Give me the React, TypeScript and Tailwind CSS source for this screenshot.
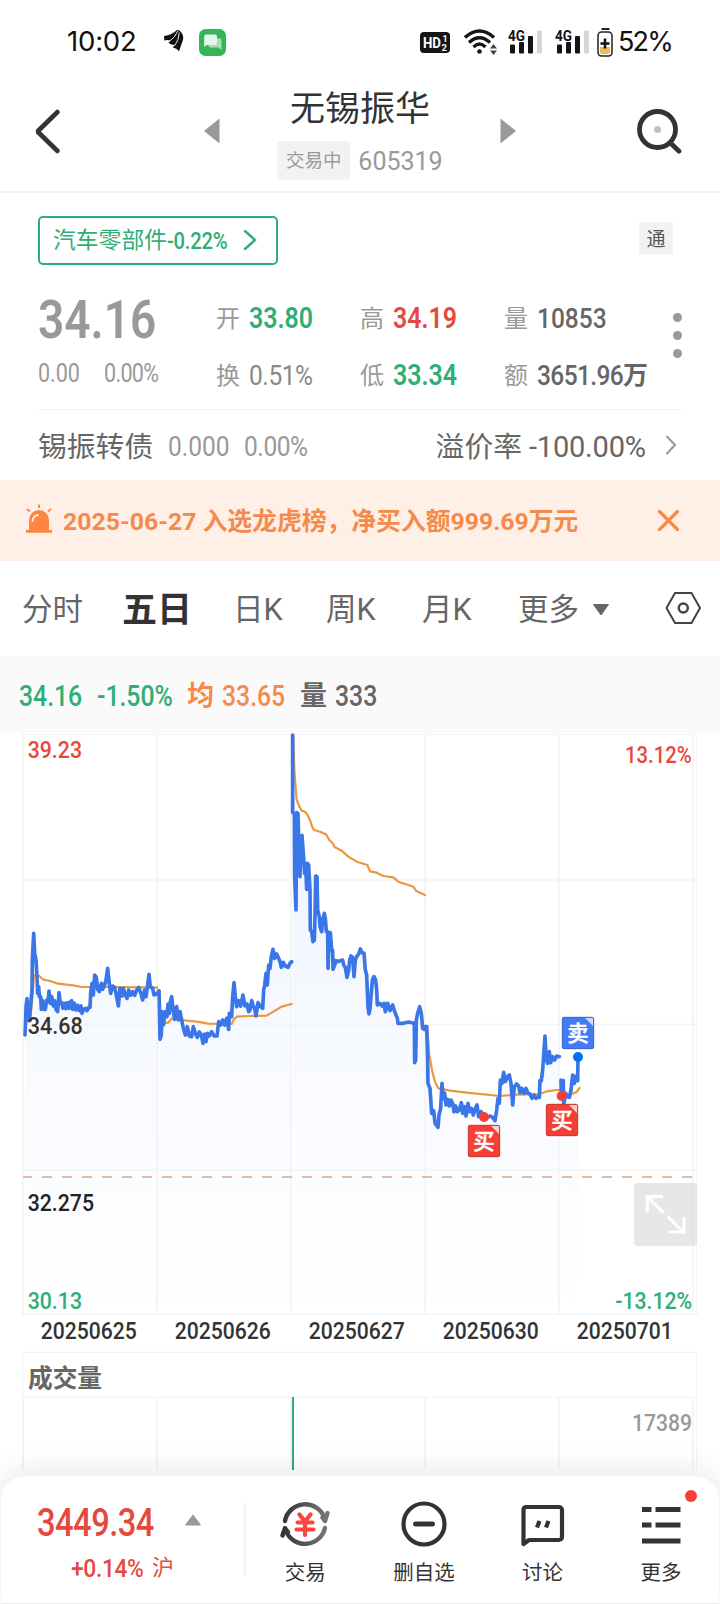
import React from "react";

const sessions = [
  {
    x: 0,
    price:
      "75,915 77,870 78,830 81,806 84,850 88,872 92,825 96,780 97,690 101,610 104,670 108,690 111,740 113,790 116,770 118,800 122,800 124,838 128,812 132,838 136,838 140,810 144,815 147,783 151,820 155,800 160,828 164,812 168,838 173,845 177,788 181,820 185,818 189,835 193,820 198,836 202,818 208,835 211,815 215,812 218,838 223,820 228,840 233,826 238,842 243,828 246,850 250,840 256,835 261,842 266,832 270,832 272,790 276,760 280,795 284,735 289,742 293,778 298,785 304,760 308,778 314,765 318,750 323,715 328,760 332,790 338,768 344,772 350,800 355,828 360,775 366,798 370,775 376,795 381,805 386,780 392,796 398,785 404,796 410,780 416,772 422,788 428,810 434,780 438,800 443,765 447,733 451,770 458,775 462,795 470,792 477,783",
    avg: "78,870 85,875 92,855 97,800 102,735 108,735 118,738 128,748 150,753 170,760 200,764 220,766 245,771 330,771 430,772 472,773",
  },
  {
    x: 0,
    price:
      "477,783 478,820 480,928 484,915 486,845 490,885 496,845 501,860 504,822 508,850 511,815 515,800 519,835 524,868 530,830 535,870 540,845 546,875 550,895 556,915 562,890 568,918 575,920 580,890 586,910 592,922 598,906 604,915 609,940 613,912 618,935 622,910 628,918 635,905 642,918 651,918 656,875 662,885 668,870 674,885 680,865 686,898 688,850 695,860 698,800 702,758 706,800 710,830 716,812 722,828 729,795 735,828 741,822 746,845 750,840 755,812 760,828 764,835 768,858 774,818 780,828 788,835 791,780 794,765 798,730 802,765 806,705 810,715 814,680 819,658 824,685 830,672 836,685 840,695 844,712 850,697 856,708 864,712 870,700 875,695",
    avg: "490,880 505,878 515,865 535,868 560,872 590,875 625,881 695,882 702,868 710,860 750,858 800,857 825,842 845,830 875,822",
  },
  {
    x: 840,
    price:
      "38,15 38,248 43,250 44,440 48,540 50,248 54,250 56,330 60,440 62,360 66,316 70,370 74,430 78,425 80,478 82,400 86,405 90,480 91,600 95,605 99,635 103,630 105,560 107,438 111,440 113,540 118,560 120,590 125,605 128,570 133,550 136,565 139,605 143,605 144,715 148,610 151,608 155,660 158,660 159,718 164,705 168,692 174,695 180,692 188,690 191,705 196,712 201,742 206,720 209,690 213,678 218,682 222,740 226,690 230,680 236,672 241,657 246,668 252,670 256,720 260,735 264,830 267,852 270,835 273,800 277,750 282,740 287,750 290,780 292,825 300,820 306,828 312,820 316,845 323,820 330,842 338,825 344,845 352,865 354,880 370,880 385,876 403,880 404,998 407,990 409,870 413,850 419,830 424,850 428,895 432,898 436,890 440,890",
    avg: "40,20 43,120 50,210 58,230 65,242 72,244 80,250 92,275 97,292 103,300 120,305 138,313 148,330 158,340 165,352 185,362 205,380 230,395 262,405 270,424 290,428 310,438 340,442 355,455 385,465 400,470 408,482 435,495",
  },
  {
    x: 1200,
    price:
      "80,890 83,990 84,1060 90,1075 95,1150 101,1142 105,1180 109,1185 114,1192 117,1155 122,1135 126,1060 129,1105 134,1090 138,1125 143,1108 148,1128 153,1110 158,1120 162,1145 167,1128 172,1145 178,1140 184,1118 188,1150 194,1130 198,1158 204,1120 209,1145 214,1135 220,1155 225,1138 231,1125 236,1160 243,1145 250,1155 258,1165 270,1158 278,1162 285,1172 290,1140 294,1105 298,1120 301,1050 306,1060 311,1027 316,1055 322,1040 328,1035 333,1060 338,1125 343,1070 350,1062 356,1068 360,1088 366,1075 372,1090 378,1075 384,1090 390,1092 396,1105 402,1095 408,1105 414,1100 418,1102 420,1052 424,1052 428,1020 432,960 435,918 439,990 443,1000 448,965 452,998 458,980 464,990 470,978 478,980",
    avg: "82,900 88,975 98,1030 106,1058 115,1075 150,1082 200,1088 300,1098 350,1094 420,1092 440,1084 470,1080 484,1080",
  },
  {
    x: 1200,
    price:
      "483,1050 484,1095 490,1052 491,1125 497,1090 502,1100 508,1102 513,1080 518,1035 523,1060 528,1038 533,1052 534,981",
    avg: "484,1080 500,1100 515,1092 530,1086 539,1074",
  },
];

const gridX = [69, 471, 873, 1275, 1677, 2079];

const dates = [
  { label: "20250625", x: 124 },
  { label: "20250626", x: 526 },
  { label: "20250627", x: 928 },
  { label: "20250630", x: 1330 },
  { label: "20250701", x: 1732 },
];

const trades = [
  { label: "买", x: 1404, y: 1185, dotX: 1452, dotY: 1161, fill: "#f53f35", edge: "#c9332b", dot: "#f53f35" },
  { label: "买", x: 1638, y: 1122, dotX: 1685, dotY: 1098, fill: "#f53f35", edge: "#c9332b", dot: "#f53f35" },
  { label: "卖", x: 1686, y: 861, dotX: 1734, dotY: 981, fill: "#427af7", edge: "#3563cc", dot: "#0073f5" },
];

// Narrow figures: the className carries the width that the squeezed text takes up
const Num = ({ children, className = "" }: { children: React.ReactNode; className?: string }) => (
  <span className={`inline-block shrink-0 whitespace-nowrap ${className}`}>
    <span className="inline-block origin-left scale-x-[0.86]">{children}</span>
  </span>
);

// areas are closed along the first and last x of the line
const closeArea = (points: string) => {
  const list = points.split(" ");
  const first = list[0].split(",")[0];
  const last = list[list.length - 1].split(",")[0];
  return `${first},1753 ${points} ${last},1753`;
};

const SignalIcon = () => (
  <svg width="35" height="26" viewBox="0 0 35 26">
    <text x="0" y="11.5" fontSize="15" fontWeight="700" fill="#111" textLength="17" lengthAdjust="spacingAndGlyphs">4G</text>
    <g fill="#151515">
      <rect x="2" y="15.5" width="5" height="9" rx="1" />
      <rect x="11" y="13" width="5" height="11.5" rx="1" />
      <rect x="20" y="7" width="5" height="17.5" rx="1" />
    </g>
    <rect x="29" y="1.5" width="5" height="23" rx="1" fill="#d6d6d6" />
  </svg>
);

const StatusBar = () => (
  <div className="flex h-[84px] items-center pl-[67px] pr-[50px] text-[#111]">
    <span className="w-[97px] font-[Inter] text-[27.5px] tracking-[-0.2px]">10:02</span>
    <svg width="20" height="22" viewBox="0 0 20 22" className="mt-[-2px]">
      <path d="M0 6Q8 5 13 0L15.500 0.500Q20.500 5 18.800 10.500Q17.500 14 15 21.500Q13.500 18.500 9 17.500L10.500 14.500Q8 15.500 4.500 13L6.500 10.500Q3 9.500 0.300 10.500Z" fill="#111" />
      <path d="M5 11.500Q11 8 13.800 1M10.500 16Q15 10 15.300 2.500" fill="none" stroke="#fff" strokeWidth="0.900" />
    </svg>
    <svg width="27" height="27" viewBox="0 0 27 27" className="ml-[15px]">
      <rect width="27" height="27" rx="6.5" fill="#35b558" />
      <path d="M10 9.5h10.5a2 2 0 0 1 2 2v9.5l-3-2.5H11.500a2 2 0 0 1-2-2z" fill="#a8e0b5" />
      <path d="M7 5.500h9a2 2 0 0 1 2 2v6.500a2 2 0 0 1-2 2H8l-2.800 2V7.500a2 2 0 0 1 1.800-2z" fill="#e5f7e9" />
    </svg>
    <svg width="30" height="21" viewBox="0 0 30 21" className="ml-auto">
      <rect width="30" height="21" rx="4" fill="#151515" />
      <g fill="#fff" fontWeight="700">
        <text x="3" y="16" fontSize="15.5" textLength="18" lengthAdjust="spacingAndGlyphs">HD</text>
        <text x="22.500" y="9.500" fontSize="9">1</text>
        <text x="21.500" y="18.500" fontSize="9.500">2</text>
      </g>
    </svg>
    <svg width="34" height="26" viewBox="0 0 34 26" className="ml-3.5">
      <g fill="none" stroke="#151515" strokeWidth="3.4">
        <path d="M1 8.500Q15.500-4.500 30 8.500" />
        <path d="M5 13.500Q15.500 4 26 13.500" />
        <path d="M9.500 18Q15.500 12 21.500 18" />
      </g>
      <circle cx="15.500" cy="22.500" r="2.300" fill="#151515" />
      <path d="M29.500 15l3.500 4.500h-7zM29.500 26l3.500-4.500h-7z" fill="#444" />
    </svg>
    <div className="ml-2.5 flex gap-3">
      <SignalIcon />
      <SignalIcon />
    </div>
    <svg width="16" height="29" viewBox="0 0 16 29" className="ml-[7px]">
      <rect x="4.500" y="0" width="8" height="2" fill="#222" />
      <rect x="1" y="4" width="14" height="24" rx="3.500" fill="none" stroke="#222" strokeWidth="1.500" />
      <path d="M3 19h10v5a2 2 0 0 1-2 2H5a2 2 0 0 1-2-2z" fill="#eebc50" />
      <path d="M8 10.500v10M3.500 15.500h9" stroke="#111" strokeWidth="2.500" />
    </svg>
    <span className="ml-[5px] w-[52px] whitespace-nowrap font-[Inter] text-[27px] tracking-[-1.8px]">52%</span>
  </div>
);

const Header = () => (
  <header className="flex h-[109px] items-start border-b-2 border-[#f2f2f2] pl-[34px] pr-[38px]">
    <svg width="27" height="48" viewBox="0 0 27 48" className="mt-[23px]">
      <path d="M23.500 5L3.500 24.500L23.500 44" fill="none" stroke="#333" strokeWidth="4.600" strokeLinecap="round" strokeLinejoin="bevel" />
    </svg>
    <div className="ml-[143px] flex">
      <svg width="16" height="26" viewBox="0 0 16 26" className="mt-[34px]">
        <path d="M0 13L15.500 0.500V25.500z" fill="#999" />
      </svg>
      <div className="mx-[58px] flex w-[164px] flex-col items-center pt-[3px]">
        <h1 className="text-[35px] leading-[46px] text-[#333]">无锡振华</h1>
        <div className="mt-[7px] flex items-center gap-[8px]">
          <span className="flex h-[39px] w-[73px] items-center justify-center rounded bg-[#f2f2f2] pt-[3px] text-[18.5px] text-[#999]">交易中</span>
          <span className="pt-[3px] text-[25px] text-[#999]">605319</span>
        </div>
      </div>
      <svg width="16" height="26" viewBox="0 0 16 26" className="mt-[34px]">
        <path d="M16 13L0.500 0.500V25.500z" fill="#999" />
      </svg>
    </div>
    <svg width="46" height="46" viewBox="0 0 46 46" className="ml-auto mt-[24px]">
      <circle cx="21.500" cy="21.500" r="18" fill="none" stroke="#333" strokeWidth="4.800" />
      <path d="M34.500 35L43 43.200" stroke="#333" strokeWidth="4.800" strokeLinecap="round" />
      <circle cx="21.500" cy="21.500" r="3.500" fill="#c0c0c0" />
    </svg>
  </header>
);

const Stat = ({ label, children }: { label: string; children: React.ReactNode }) => (
  <div className="flex h-[57px] items-center gap-[9px] whitespace-nowrap pt-[3px]">
    <span className="text-[24px] text-[#999]">{label}</span>
    {children}
  </div>
);

const Quote = () => (
  <section className="h-[287px] px-[38px] pt-[23px]">
    <div className="flex items-center justify-between pr-[9px]">
      <div className="flex h-[49px] w-[240px] items-center rounded-[5px] border-2 border-[#2fae75] pl-[13px] pt-0.5 text-[#2fae75]">
        <span className="text-[22.8px]">汽车零部件</span>
        <Num className="w-[62px] text-[23.500px] font-medium tracking-[-0.3px]">-0.22%</Num>
        <svg width="14" height="22" viewBox="0 0 14 22" className="ml-3.5 mt-[-3px]">
          <path d="M2 2L12 11L2 20" fill="none" stroke="#2fae75" strokeWidth="2.400" strokeLinecap="round" />
        </svg>
      </div>
      <span className="mt-[-5px] flex h-8 w-[34px] items-center justify-center bg-[#f2f2f2] pt-[4px] text-[19px] text-[#555]">通</span>
    </div>

    <div className="mt-6 flex h-[120px]">
      <div className="w-[178px] text-[#999]">
        <Num className="mt-px w-[120px] text-[53.500px] font-semibold leading-[60px]">34.16</Num>
        <div className="mt-2.5 flex text-[25px] leading-[28px]">
          <Num className="w-[66px]">0.00</Num>
          <Num className="w-[60px] tracking-[-0.8px]">0.00%</Num>
        </div>
      </div>
      <div className="w-[144px]">
        <Stat label="开"><Num className="w-16 text-[29px] font-semibold text-[#2fae75]">33.80</Num></Stat>
        <Stat label="换"><Num className="w-16 text-[28.5px] tracking-[-0.5px] text-[#888]">0.51%</Num></Stat>
      </div>
      <div className="w-[144px]">
        <Stat label="高"><Num className="w-16 text-[29px] font-semibold text-[#e5493e]">34.19</Num></Stat>
        <Stat label="低"><Num className="w-16 text-[29px] font-semibold text-[#2fae75]">33.34</Num></Stat>
      </div>
      <div className="w-[169px]">
        <Stat label="量"><Num className="w-[70px] text-[28.5px] font-medium text-[#666]">10853</Num></Stat>
        <Stat label="额">
          <span className="flex items-center text-[#666]">
            <span className="inline-block w-[86px] whitespace-nowrap text-[28.5px] font-medium">
              <span className="inline-block w-[86px] origin-left scale-x-[0.86] tracking-[-0.700px]">3651.96</span>
            </span>
            <span className="text-[25px] font-bold">万</span>
          </span>
        </Stat>
      </div>
      <div className="flex flex-col gap-[9px] pt-[24px]">
        <i className="size-[9px] rounded-full bg-[#999]" />
        <i className="size-[9px] rounded-full bg-[#999]" />
        <i className="size-[9px] rounded-full bg-[#999]" />
      </div>
    </div>

    <div className="flex h-[71px] items-center border-t border-[#f4f4f4] pt-[5px] text-[28.8px] text-[#666]">
      <span>锡振转债</span>
      <Num className="ml-[15px] w-[76px] text-[28.5px] text-[#999]">0.000</Num>
      <Num className="text-[28.5px] tracking-[-0.5px] text-[#999]">0.00%</Num>
      <span className="ml-auto">溢价率</span>
      <span className="ml-[7px] w-[119px] whitespace-nowrap text-[29px] tracking-[-0.200px]">-100.00%</span>
      <svg width="12" height="20" viewBox="0 0 12 20" className="ml-[17px] mr-[5px] mt-[-5px]">
        <path d="M2 1.500L10 10L2 18.500" fill="none" stroke="#999" strokeWidth="2" strokeLinecap="round" />
      </svg>
    </div>
  </section>
);

const Banner = () => (
  <div className="flex h-[81px] items-center bg-[#fff0e7] pl-[25px] pr-[41px] text-[#f58a4b]">
    <svg width="28" height="30" viewBox="0 0 28 30" className="mt-[-4px]">
      <path d="M4 26V16a10 10 0 0 1 20 0v10h3v2.800H1V26z" fill="#ff8541" />
      <path d="M7.500 17a6.500 6.500 0 0 1 5.500-6" fill="none" stroke="#fff0e7" strokeWidth="1.800" strokeLinecap="round" />
      <path d="M14 0.500V4M2 5l3 2.500M26 5l-3 2.500" stroke="#f58a4b" strokeWidth="2" />
    </svg>
    <span className="ml-2.5 whitespace-nowrap pt-[3px] text-[24.8px] font-bold">2025-06-27 入选龙虎榜，净买入额999.69万元</span>
    <svg width="21" height="21" viewBox="0 0 21 21" className="ml-auto">
      <path d="M1.500 1.500L19.500 19.500M19.500 1.500L1.500 19.500" stroke="#f58a4b" strokeWidth="3.200" strokeLinecap="round" />
    </svg>
  </div>
);

const Tabs = () => (
  <nav className="flex h-[95px] items-center whitespace-nowrap pl-[22px] pr-[19px] pt-0.5 text-[30.500px] text-[#666]">
    <span className="w-[100px]">分时</span>
    <span className="w-[111px] pt-[3px] text-[35px] font-bold text-[#333]">五日</span>
    <span className="w-[93px]">日K</span>
    <span className="w-[96px]">周K</span>
    <span className="w-[96px]">月K</span>
    <span>更多</span>
    <svg width="16" height="12" viewBox="0 0 16 12" className="ml-[14px]">
      <path d="M0.500 0.500h15L8 11z" fill="#666" stroke="#666" strokeLinejoin="round" />
    </svg>
    <svg width="36" height="32" viewBox="0 0 36 32" className="ml-auto mt-[-3px]">
      <path d="M10 1h16.500L35 16l-8.500 15H10L1.500 16z" fill="none" stroke="#444" strokeWidth="2" strokeLinejoin="round" />
      <circle cx="18.300" cy="16" r="4.500" fill="none" stroke="#444" strokeWidth="2.500" />
    </svg>
  </nav>
);

const Readout = () => (
  <div className="flex h-[77px] items-center bg-[#fafafa] pl-[19px] pt-[4px] text-[28.800px] font-medium">
    <Num className="w-[78px] text-[#2fae75]">34.16</Num>
    <Num className="w-[90px] text-[#2fae75]">-1.50%</Num>
    <span className="w-[35px] text-[27px] font-bold text-[#f58a4b]">均</span>
    <Num className="w-[78px] text-[#f58a4b]">33.65</Num>
    <span className="w-[35px] text-[27px] font-bold text-[#666]">量</span>
    <Num className="text-[#666]">333</Num>
  </div>
);

// Drawn at three units to the pixel
const Chart = () => (
  <svg width="720" height="737" viewBox="0 9 2160 2211" className="block">
    <defs>
      <linearGradient id="area" gradientUnits="userSpaceOnUse" x1="0" y1="12" x2="0" y2="1753">
        <stop offset="0" stopColor="#3b78e7" stopOpacity="0.1" />
        <stop offset="0.6" stopColor="#3b78e7" stopOpacity="0.035" />
        <stop offset="1" stopColor="#3b78e7" stopOpacity="0" />
      </linearGradient>
    </defs>

    {sessions.map((s, i) => (
      <g key={i} transform={`translate(${s.x} 0)`}>
        <polygon points={closeArea(s.price)} fill="url(#area)" />
      </g>
    ))}

    <g stroke="#f4f4f5" strokeWidth="5" fill="none">
      {gridX.map((x) => (
        <path key={x} d={`M${x} 13V1753M${x} 2001V2220`} />
      ))}
      <path d="M69 450H2090M69 884H2090M69 1320H2090" />
      <path d="M69 13H2090V1753H69M69 2220V1867H2090V2220M69 2002H2090" stroke="#f1f1f1" strokeWidth="3" />
    </g>

    {sessions.map((s, i) => (
      <g key={i} transform={`translate(${s.x} 0)`} fill="none" strokeLinejoin="round" strokeLinecap="round">
        <polyline points={s.avg} stroke="#e9983d" strokeWidth="6.500" />
        <polyline points={s.price} stroke="#3b76e8" strokeWidth="11" />
      </g>
    ))}

    <path d="M69 1341H2079" stroke="#e3bb9e" strokeWidth="6" strokeDasharray="30 30" strokeDashoffset="3" />

    {trades.map((t) => (
      <g key={t.x}>
        <circle cx={t.dotX} cy={t.dotY} r="15" fill={t.dot} />
        <rect x={t.x + 1} y={t.y + 1} width="94" height="94" rx="5" fill={t.fill} stroke={t.edge} strokeWidth="3" />
        <path d={`M${t.x + 69} ${t.y + 3}h24v24z`} fill="#fff" fillOpacity="0.75" />
        <text x={t.x + 48} y={t.y + 72} fontSize="64" fontWeight="500" textAnchor="middle" fill="#fff" stroke="#fff" strokeWidth="1.500">{t.label}</text>
      </g>
    ))}

    <g fontSize="73" fontWeight="500">
      <text x="83" y="83" fill="#e5493e" textLength="163" lengthAdjust="spacingAndGlyphs">39.23</text>
      <text x="1875" y="100" fill="#e5493e" textLength="200" lengthAdjust="spacingAndGlyphs">13.12%</text>
      <text x="83" y="912" fill="#333" textLength="165" lengthAdjust="spacingAndGlyphs">34.68</text>
      <text x="83" y="1443" fill="#222" textLength="199" lengthAdjust="spacingAndGlyphs">32.275</text>
      <text x="83" y="1736" fill="#2fae75" textLength="163" lengthAdjust="spacingAndGlyphs">30.13</text>
      <text x="1846" y="1736" fill="#2fae75" textLength="230" lengthAdjust="spacingAndGlyphs">-13.12%</text>
      {dates.map((d) => (
        <text key={d.label} x={d.x - 2} y="1826" fill="#333" textLength="288" lengthAdjust="spacingAndGlyphs">{d.label}</text>
      ))}
      <text x="84" y="1971" fontSize="74" fontWeight="700" fill="#666">成交量</text>
      <text x="1896" y="2102" fill="#999" textLength="180" lengthAdjust="spacingAndGlyphs">17389</text>
    </g>

    <path d="M879 2001V2220" stroke="#2fae75" strokeWidth="6" />

    <rect x="1902" y="1359" width="189" height="189" rx="12" fill="#d9d9d9" fillOpacity="0.62" />
    <path d="M1984 1400h-42v42M1944 1402l44 44M2006 1462l44 44M2010 1506h42v-42" fill="none" stroke="#fff" strokeWidth="9.500" strokeLinecap="round" />
  </svg>
);

const navItems = [
  {
    label: "交易",
    icon: (
      <svg width="50" height="46" viewBox="0 0 50 46">
        <defs>
          <linearGradient id="ring" gradientUnits="userSpaceOnUse" x1="2" y1="0" x2="48" y2="0">
            <stop offset="0" stopColor="#333" />
            <stop offset="1" stopColor="#777" />
          </linearGradient>
        </defs>
        <g fill="none" stroke="url(#ring)" strokeWidth="4.400" strokeLinecap="round" strokeLinejoin="round">
          <path d="M5 20A20.500 20.500 0 0 1 44.500 17" />
          <path d="M45 27A20.500 20.500 0 0 1 6 30" />
          <path d="M47.500 12L45 20L42.500 16.500M2.500 34.500L5 27L8 31" />
        </g>
        <path d="M19.500 13.500l5.500 7l5.500-7M17.500 21.500h15M16.500 28.500h17M25 21v13" fill="none" stroke="#f8473f" strokeWidth="4.200" strokeLinecap="round" />
      </svg>
    ),
  },
  {
    label: "删自选",
    icon: (
      <svg width="46" height="46" viewBox="0 0 46 46">
        <circle cx="23" cy="23" r="20.500" fill="none" stroke="#333" strokeWidth="4.200" />
        <path d="M14.500 23h17" stroke="#333" strokeWidth="5" strokeLinecap="round" />
      </svg>
    ),
  },
  {
    label: "讨论",
    icon: (
      <svg width="46" height="46" viewBox="0 0 46 46">
        <path d="M7 6h33a3 3 0 0 1 3 3v27a3 3 0 0 1-3 3H10L4.500 43V9a3 3 0 0 1 2.500-3z" fill="none" stroke="#333" strokeWidth="4.200" strokeLinejoin="round" />
        <path d="M20.500 20l-2.500 6.500M29.500 20l-2.500 6.500" stroke="#333" strokeWidth="4.200" />
      </svg>
    ),
  },
  {
    label: "更多",
    icon: (
      <svg width="46" height="46" viewBox="0 0 46 46">
        <path d="M4 8.500h9.500M17.500 8.500h25M4 24h9.500M17.500 24h25M4 40h38.500" stroke="#333" strokeWidth="4.800" />
      </svg>
    ),
  },
];

const BottomBar = () => (
  <footer className="relative z-10 mx-px mt-[6px] flex h-[128px] rounded-t-[24px] border-b border-[#eee] bg-white shadow-[0_-4px_32px_rgba(0,0,0,0.1)]">
    <div className="w-[208px] shrink-0 pt-[27px] text-[#e5493e]">
      <div className="flex items-center pl-[36px]">
        <Num className="w-[147.500px] text-[38px] font-medium leading-[40px] tracking-[-0.6px]">3449.34</Num>
        <svg width="16" height="12" viewBox="0 0 16 12" className="mt-[-6px]">
          <path d="M0.500 11h15L8 1z" fill="#999" stroke="#999" strokeLinejoin="round" />
        </svg>
      </div>
      <div className="mt-[9px] flex items-center pl-[70px] leading-[32px]">
        <Num className="w-[81px] text-[26.500px] font-medium tracking-[-0.4px]">+0.14%</Num>
        <span className="text-[22px]">沪</span>
      </div>
    </div>
    <div className="ml-[35px] mt-[27px] h-[73px] w-0.5 shrink-0 bg-[#f2f2f2]" />
    <div className="flex shrink-0">
      {navItems.map((item) => (
        <div key={item.label} className="flex w-[118.6px] flex-col items-center pt-[25px]">
          {item.icon}
          <span className="mt-[11px] text-[20.500px] leading-[30px] text-[#333]">{item.label}</span>
        </div>
      ))}
    </div>
    <i className="absolute left-[684px] top-3.5 size-3 rounded-full bg-[#f53f35]" />
  </footer>
);

const App = () => {
  return (
    <div className="h-[1604px] w-[720px] overflow-hidden bg-white font-['Roboto','Noto_Sans_CJK_SC',sans-serif]">
      <StatusBar />
      <Header />
      <Quote />
      <Banner />
      <Tabs />
      <Readout />
      <Chart />
      <BottomBar />
    </div>
  );
};

export default App;
